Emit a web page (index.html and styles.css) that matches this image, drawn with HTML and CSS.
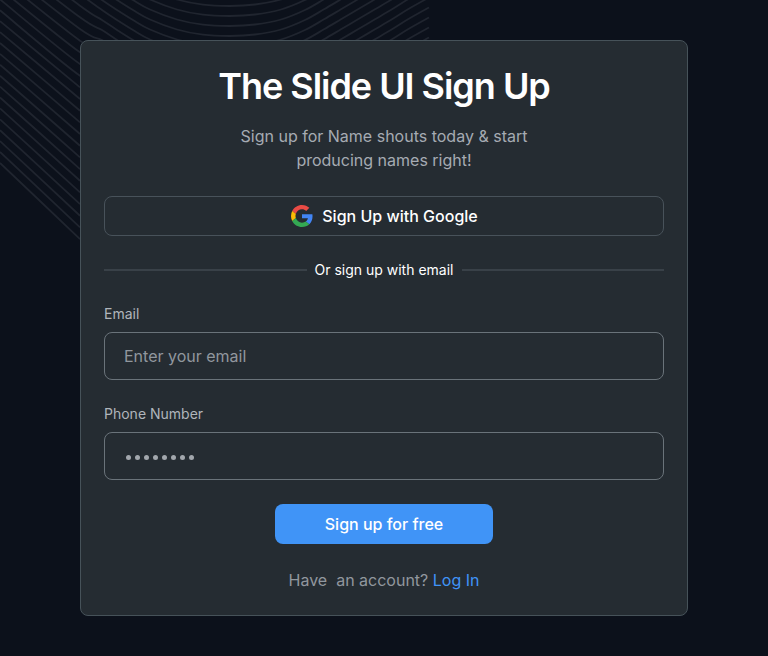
FILE: index.html
```html
<!DOCTYPE html>
<html lang="en">
<head>
<meta charset="utf-8">
<title>Sign Up</title>
<link rel="stylesheet" href="styles.css">
</head>
<body>
<svg class="waves" viewBox="0 0 430 260" aria-hidden="true"><g id="waves"></g></svg>
<main class="card">
  <h1>The Slide UI Sign Up</h1>
  <p class="intro">Sign up for Name shouts today &amp; start<br>producing names right!</p>
  <button class="google" type="button">
    <svg viewBox="0 0 48 48" aria-hidden="true">
      <path fill="#e94b45" d="M24 9.5c3.54 0 6.71 1.22 9.21 3.6l6.85-6.85C35.9 2.38 30.47 0 24 0 14.62 0 6.51 5.38 2.56 13.22l7.98 6.19C12.43 13.72 17.74 9.5 24 9.5z"/>
      <path fill="#4285f4" d="M46.98 24.55c0-1.57-.15-3.09-.38-4.55H24v9.02h12.94c-.58 2.96-2.26 5.48-4.78 7.18l7.73 6c4.51-4.18 7.09-10.36 7.09-17.65z"/>
      <path fill="#fbbc05" d="M10.53 28.59A14.5 14.5 0 0 1 9.77 24c0-1.6.27-3.14.76-4.59l-7.98-6.19A23.9 23.9 0 0 0 0 24c0 3.88.92 7.54 2.56 10.78l7.97-6.19z"/>
      <path fill="#34a853" d="M24 48c6.48 0 11.93-2.13 15.89-5.81l-7.73-6c-2.15 1.45-4.92 2.3-8.16 2.3-6.26 0-11.57-4.22-13.47-9.91l-7.98 6.19C6.51 42.62 14.62 48 24 48z"/>
    </svg>
    <span>Sign Up with Google</span>
  </button>
  <div class="divider"><span>Or sign up with email</span></div>
  <form>
    <label for="email">Email</label>
    <input id="email" type="text" placeholder="Enter your email">
    <label for="phone">Phone Number</label>
    <div class="field" id="phone"><i></i><i></i><i></i><i></i><i></i><i></i><i></i><i></i></div>
    <button class="submit" type="button">Sign up for free</button>
  </form>
  <p class="login">Have&nbsp; an account? <a href="#">Log In</a></p>
</main>
<script src="waves.js"></script>
</body>
</html>
```

FILE: styles.css
```css
* { box-sizing: border-box; }
body {
  margin: 0;
  padding: 40px 80px;
  height: 656px;
  overflow: hidden;
  background: #0c111b;
  color: #fff;
  font-family: Inter, "Liberation Sans", sans-serif;
  font-size: 16px;
  line-height: 24px;
}
.waves {
  position: absolute;
  left: 0;
  top: 0;
  width: 430px;
  height: 260px;
  fill: none;
  stroke: #20252f;
  stroke-width: 1.8;
}
.card {
  position: relative;
  height: 576px;
  padding: 23px;
  background: #252c32;
  border: 1px solid #465259;
  border-radius: 8px;
  text-align: center;
}
h1 {
  margin: 0;
  font-size: 36px;
  line-height: 44px;
  font-weight: 600;
  letter-spacing: -1.03px;
}
.intro { margin: 16px 0 24px; color: #a6abb3; }
button { font: inherit; color: inherit; }
.google {
  display: flex;
  align-items: center;
  justify-content: center;
  gap: 8px;
  width: 100%;
  height: 40px;
  padding: 0;
  background: none;
  border: 1px solid #48525a;
  border-radius: 8px;
  font-weight: 500;
}
.google svg { width: 24px; height: 24px; padding: 1px; }
.divider {
  display: flex;
  align-items: center;
  gap: 8px;
  height: 20px;
  margin: 24px 0;
  font-size: 14px;
  line-height: 20px;
}
.divider::before, .divider::after {
  content: "";
  flex: 1;
  height: 2px;
  background: #394148;
}
form { display: flex; flex-direction: column; }
label {
  margin-bottom: 8px;
  color: #b0b5bb;
  font-size: 14px;
  line-height: 20px;
  text-align: left;
}
input, .field {
  display: flex;
  align-items: center;
  gap: 4px;
  height: 48px;
  margin: 0 0 24px;
  padding: 0 19px;
  background: transparent;
  border: 1px solid #6a737a;
  border-radius: 8px;
  font: inherit;
}
input::placeholder { color: #91979e; opacity: 1; }
.field { padding: 2px 21px 0; }
.field i { width: 5px; height: 5px; border-radius: 50%; background: #a2a7ad; }
.submit {
  align-self: center;
  width: 218px;
  height: 40px;
  padding: 0;
  background: #4094f7;
  border: 0;
  border-radius: 8px;
  font-weight: 500;
}
.login { margin: 24px 0 0; color: #91979e; }
.login a { color: #4094f7; text-decoration: none; }
```

FILE: waves.js
```js
// Each contour dips at x = 230; pairs are [x, height above the dip].
const profile = [
  [102, 46], [117, 36], [133, 26], [150, 16.5], [177, 6.5], [203, 1.3],
  [230, 0], [255, 1.5], [281, 6.5], [305, 16], [324, 26.7], [341, 36.7],
  [358, 46.7], [375, 56.7], [392, 66.7], [408, 76.7], [429, 88.5]
];

// Catmull-Rom spline through the points, written as cubic segments.
function smooth(points) {
  let d = `M${points[0][0]} ${points[0][1]}`;
  for (let i = 0; i < points.length - 1; i++) {
    const a = points[Math.max(i - 1, 0)];
    const b = points[i];
    const c = points[i + 1];
    const e = points[Math.min(i + 2, points.length - 1)];
    d += `C${b[0] + (c[0] - a[0]) / 6} ${b[1] + (c[1] - a[1]) / 6} `
      + `${c[0] - (e[0] - b[0]) / 6} ${c[1] - (e[1] - b[1]) / 6} ${c[0]} ${c[1]}`;
  }
  return d;
}

const group = document.getElementById("waves");
for (let k = 0; k <= 26; k++) {
  const dip = 6 + 10 * k;
  const points = [
    [0, -66 + 10.9 * (k - 5)],
    [80, k < 5 ? dip - 62 : -6 + 11.67 * (k - 5)]
  ];
  for (const [x, height] of profile) {
    if (k <= 12) points.push([x, dip - height]);
  }
  const path = document.createElementNS("http://www.w3.org/2000/svg", "path");
  path.setAttribute("d", smooth(points));
  group.appendChild(path);
}
```
